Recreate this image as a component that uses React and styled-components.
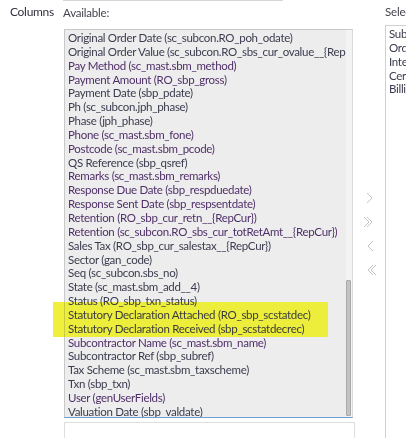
import React from "react";
import styled, { createGlobalStyle } from "styled-components";

const GlobalStyle = createGlobalStyle`
  html, body {
    margin: 0;
    padding: 0;
    background: #ffffff;
    overflow: hidden;
  }
  body {
    font-family: Lato, "Open Sans", "Liberation Sans", sans-serif;
    color: #3b3b48;
  }
`;

const available = [
  ["Original Order Date (sc_subcon.RO_poh_odate)"],
  ["Original Order Value (sc_subcon.RO_sbs_cur_ovalue__{RepCur})"],
  ["Pay Method (sc_mast.sbm_method)", "purple"],
  ["Payment Amount (RO_sbp_gross)", "purple"],
  ["Payment Date (sbp_pdate)"],
  ["Ph (sc_subcon.jph_phase)"],
  ["Phase (jph_phase)"],
  ["Phone (sc_mast.sbm_fone)", "purple"],
  ["Postcode (sc_mast.sbm_pcode)", "purple"],
  ["QS Reference (sbp_qsref)"],
  ["Remarks (sc_mast.sbm_remarks)", "purple"],
  ["Response Due Date (sbp_respduedate)", "purple"],
  ["Response Sent Date (sbp_respsentdate)", "purple"],
  ["Retention (RO_sbp_cur_retn__{RepCur})", "purple"],
  ["Retention (sc_subcon.RO_sbs_cur_totRetAmt__{RepCur})", "purple"],
  ["Sales Tax (RO_sbp_cur_salestax__{RepCur})"],
  ["Sector (gan_code)"],
  ["Seq (sc_subcon.sbs_no)"],
  ["State (sc_mast.sbm_add__4)"],
  ["Status (RO_sbp_txn_status)"],
  ["Statutory Declaration Attached (RO_sbp_scstatdec)"],
  ["Statutory Declaration Received (sbp_scstatdecrec)"],
  ["Subcontractor Name (sc_mast.sbm_name)", "purple"],
  ["Subcontractor Ref (sbp_subref)"],
  ["Tax Scheme (sc_mast.sbm_taxscheme)"],
  ["Txn (sbp_txn)"],
  ["User (genUserFields)", "purple"],
  ["Valuation Date (sbp_valdate)"],
];

const selected = [
  "Subcontractor Name (sc_mast.sbm_name)",
  "Order No (sc_subcon.RO_poh_orderno)",
  "Interim No (sbp_interim)",
  "Certificate No (sbp_certno)",
  "Billing Date (sbp_billdate)",
];

const Page = styled.div`
  position: relative;
  width: 406px;
  height: 438px;
  overflow: hidden;
`;

const TopRule = styled.div`
  margin-left: 63px;
  width: 220px;
  height: 0;
  border-top: 1px solid #d6d6d6;
`;

const FieldRow = styled.div`
  display: flex;
  align-items: flex-start;
`;

const RowLabel = styled.div`
  flex: none;
  width: 63px;
  box-sizing: border-box;
  padding: 3px 0 0 10px;
  font-size: 12px;
  letter-spacing: -0.3px;
  color: #333340;
`;

const Column = styled.div`
  display: flex;
  flex-direction: column;
  flex: none;
  width: ${({ $width }) => $width}px;
`;

const Caption = styled.div`
  height: ${({ $height }) => $height}px;
  box-sizing: border-box;
  padding-top: ${({ $top }) => $top}px;
  font-size: 11.5px;
  letter-spacing: -0.2px;
  color: #444450;
  white-space: nowrap;
`;

const ListBox = styled.div`
  display: flex;
  box-sizing: border-box;
  margin-left: 1px;
  width: 289px;
  height: 389px;
  background: #ededed;
  border: 1px solid #c9c9c9;
  border-right-color: #d9d9d9;
  border-bottom: 1px solid #6b9fcf;
`;

const Items = styled.div`
  flex: 1;
  min-width: 0;
  padding: 1px 0 0 3px;
  overflow: hidden;
`;

const Item = styled.div`
  height: 13.85px;
  line-height: 13.85px;
  font-size: 11.5px;
  letter-spacing: -0.3px;
  white-space: nowrap;
  color: ${({ $tone }) => ($tone === "purple" ? "#4f2f68" : "#3a3c4e")};
`;

const Track = styled.div`
  display: flex;
  flex-direction: column;
  justify-content: flex-end;
  flex: none;
  width: 6px;
  background: #f3f3f3;
`;

const Thumb = styled.div`
  height: 134px;
  margin: 0 1px 1px 0;
  background: #c3c3c3;
  border: 1px solid #a9a9a9;
  border-radius: 1px;
`;

const BelowBox = styled.div`
  margin: 4px 0 0 1px;
  width: 291px;
  height: 30px;
  box-sizing: border-box;
  border: 1px solid #dedede;
`;

const ArrowColumn = styled.div`
  display: flex;
  flex: none;
  flex-direction: column;
  align-items: center;
  gap: 12px;
  width: 30px;
  padding-top: 191px;
`;

const ArrowButton = styled.svg`
  display: block;
  width: 14px;
  height: 12px;
  fill: none;
  stroke: #c4c4c4;
  stroke-width: 1;
`;

const SelectedBox = styled.div`
  box-sizing: border-box;
  height: 430px;
  padding: 1px 0 0 3px;
  border: 1px solid #d0d0d0;
  border-right: none;
  background: #ffffff;
  overflow: hidden;
`;

const Highlight = styled.div`
  position: absolute;
  left: 53px;
  top: 302px;
  width: 275px;
  height: 35px;
  background: rgb(240, 240, 60);
  mix-blend-mode: darken;
  pointer-events: none;
`;

const Arrow = ({ dir, double }) => {
  const pts = dir === "right" ? ["4,1 9,6 4,11"] : ["10,1 5,6 10,11"];
  if (double) {
    pts.push(dir === "right" ? "1,1 6,6 1,11" : "13,1 8,6 13,11");
  }
  return (
    <ArrowButton viewBox="0 0 14 12">
      {pts.map((p) => (
        <polyline key={p} points={p} />
      ))}
    </ArrowButton>
  );
};

const App = () => {
  return (
    <Page>
      <GlobalStyle />
      <TopRule />
      <FieldRow>
        <RowLabel>Columns</RowLabel>
        <Column $width={292}>
          <Caption $height={28} $top={5}>
            Available:
          </Caption>
          <ListBox>
            <Items>
              {available.map(([text, tone]) => (
                <Item key={text} $tone={tone}>
                  {text}
                </Item>
              ))}
            </Items>
            <Track>
              <Thumb />
            </Track>
          </ListBox>
          <BelowBox />
        </Column>
        <ArrowColumn>
          <Arrow dir="right" />
          <Arrow dir="right" double />
          <Arrow dir="left" />
          <Arrow dir="left" double />
        </ArrowColumn>
        <Column $width={200}>
          <Caption $height={24} $top={4}>
            Selected:
          </Caption>
          <SelectedBox>
            {selected.map((text) => (
              <Item key={text}>{text}</Item>
            ))}
          </SelectedBox>
        </Column>
      </FieldRow>
      <Highlight />
    </Page>
  );
};

export default App;
